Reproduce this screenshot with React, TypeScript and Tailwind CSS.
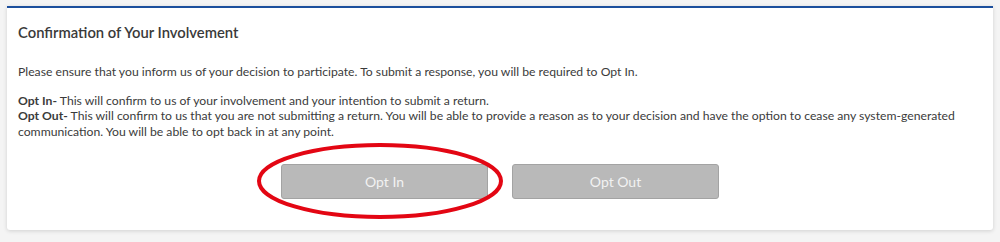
export default function App() {
  return (
    <div className="h-[242px] w-[1000px] bg-[#f4f4f4] pt-[6px] font-['Lato',sans-serif] text-[#3b3b3b]">
      <section className="mx-[7px] h-[224px] rounded-b-[3px] border-t-[2px] border-[#1c4f9c] bg-white px-[11px] shadow-[0_1px_4px_rgba(0,0,0,0.15)]">
        <h2 className="pt-[15px] text-[14.8px] font-semibold leading-[18px] text-[#3a3a3a]">
          Confirmation of Your Involvement
        </h2>
        <p className="mt-[23px] text-[12.2px] leading-[15.5px]">
          Please ensure that you inform us of your decision to participate. To submit a response, you will be
          required to Opt In.
        </p>
        <div className="mt-[13px] text-[12.2px] leading-[15.5px]">
          <p>
            <span className="font-bold">Opt In-</span> This will confirm to us of your involvement and your
            intention to submit a return.
          </p>
          <p>
            <span className="font-bold">Opt Out-</span> This will confirm to us that you are not submitting a
            return. You will be able to provide a reason as to your decision and have the option to cease any
            system-generated communication. You will be able to opt back in at any point.
          </p>
        </div>
        <div className="mt-[25px] flex justify-center gap-[24px]">
          <div className="relative">
            <button className="h-[35px] w-[207px] rounded-[3px] border border-[#a3a3a3] bg-[#b9b9b9] text-[14px] text-[#f2f2f2]">
              Opt In
            </button>
            <svg
              className="pointer-events-none absolute left-[-25px] top-[-22px]"
              width="248"
              height="78"
              viewBox="0 0 248 78"
            >
              <ellipse cx="124" cy="39" rx="121" ry="36" fill="none" stroke="#e30613" strokeWidth="4" />
            </svg>
          </div>
          <button className="h-[35px] w-[207px] rounded-[3px] border border-[#a3a3a3] bg-[#b9b9b9] text-[14px] text-[#f2f2f2]">
            Opt Out
          </button>
        </div>
      </section>
    </div>
  );
}
